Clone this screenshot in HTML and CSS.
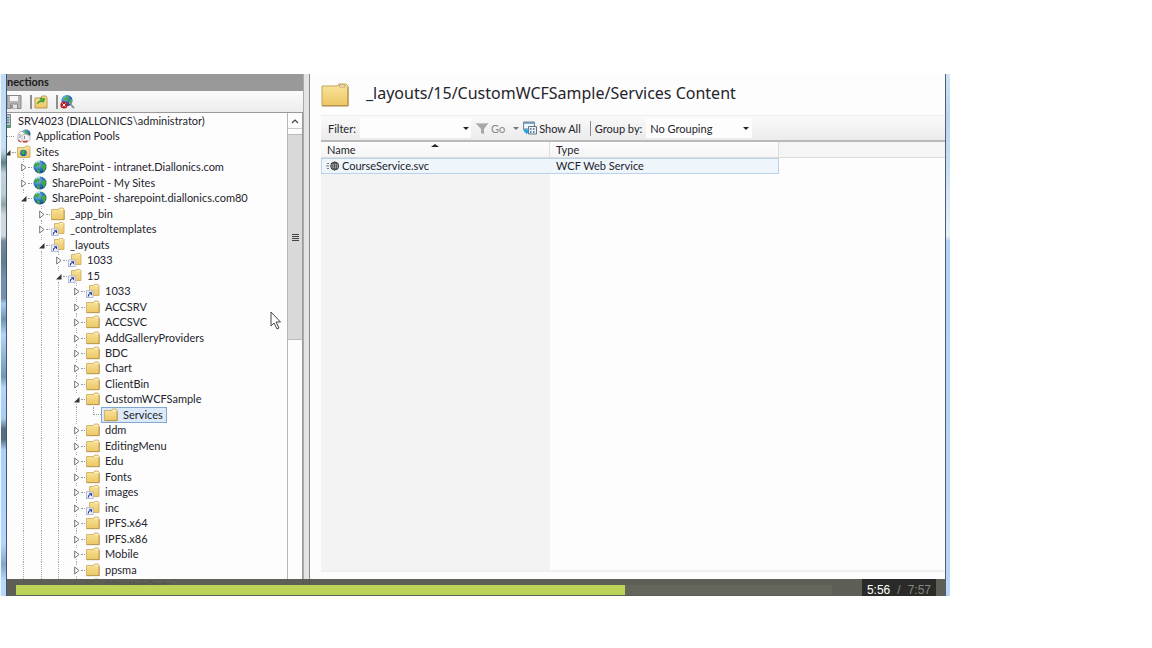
FILE: index.html
```html
<!DOCTYPE html>
<html lang="en">
<head>
<meta charset="utf-8">
<title>IIS Manager tutorial</title>
<link rel="stylesheet" href="styles.css">
</head>
<body>
<svg class="sprites" aria-hidden="true">
  <defs>
    <linearGradient id="gold" x1="0" y1="0" x2="0" y2="1"><stop offset="0" stop-color="#f9e49c"/><stop offset="1" stop-color="#edc765"/></linearGradient>
    <radialGradient id="sea" cx=".35" cy=".3" r=".8"><stop offset="0" stop-color="#8fc9f5"/><stop offset=".5" stop-color="#2878be"/><stop offset="1" stop-color="#123c78"/></radialGradient>
  </defs>
  <symbol id="folder" viewBox="0 0 14 14"><path d="M.5 2.5h7l1-1.500h3.500l1 1.500v10H.5z" fill="url(#gold)" stroke="#c9a95d" stroke-width=".8"/><path d="M9 2.500h3" stroke="#fff6cf"/><path d="M.5 12.700h12.800V3.500" fill="none" stroke="#b18e45" stroke-width=".8"/></symbol>
  <symbol id="link" viewBox="0 0 14 14"><path d="M3.500 1.500h4l1-1h3.500l1 1v10H3.500z" fill="url(#gold)" stroke="#c9a95d" stroke-width=".8"/><path d="M9 1.700h3" stroke="#fff6cf"/><rect x=".4" y="6.900" width="6.700" height="6.700" fill="#f1f3fc" stroke="#a5aed0" stroke-width=".8"/><path d="M2.300 12.500c0-1.500.4-2.200 1.500-2.700" fill="none" stroke="#21398f" stroke-width="1.200"/><path d="M2.700 8.300h3.300v3.200z" fill="#21398f"/></symbol>
  <symbol id="globe" viewBox="0 0 14 14"><circle cx="7" cy="7" r="6.500" fill="url(#sea)"/><path d="M1.500 4C3 1.500 5 1 6.500 1.200L5.500 3 7 4.500 5 6.500 3.500 6 2.500 8zM8.500 5.500l3-2 1.500 3-1 3.500-2 1.500-.5-3-1.500-1zM4 9l2.500 1 .5 2-1 1-2-1.500z" fill="#48a63f"/><path d="M3 3q2-2 4-1.500" stroke="#d6efff" fill="none"/></symbol>
  <symbol id="sites" viewBox="0 0 14 14"><path d="M.5 2.500h7l1-1.500h3.500l1 1.500v10H.5z" fill="url(#gold)" stroke="#c9a95d" stroke-width=".8"/><circle cx="6.500" cy="8" r="3.300" fill="#2268a8"/><path d="M4 7l3-2 1 2-2 3zM8 8h1.500L8 10.500z" fill="#4bb33e"/></symbol>
  <symbol id="pools" viewBox="0 0 14 14"><circle cx="9" cy="5" r="4.500" fill="url(#sea)"/><path d="M8 1l3 2-1 3-3 0zM11 5l2 1-2 2z" fill="#48a63f"/><path d="M1 5l3-3 4 2v8l-4 1-3-2z" fill="#f4f4f4" stroke="#999" stroke-width=".7"/><path d="M5 6l4-1 4 2v4l-3 2-5-1z" fill="#f5efef" stroke="#aaa" stroke-width=".7"/><path d="M1 10.500l3 2v1L1 12zM6 12l5-.5-1 2H6z" fill="#c53e35"/><path d="M3 5v4M7.500 7v3" stroke="#7994b5"/></symbol>
  <symbol id="server" viewBox="0 0 14 14"><path d="M3 .5h8.500v13H3z" fill="#b5c3ca" stroke="#75858d"/><path d="M5 3.500h5M5 6h5M5 8.500h5" stroke="#4e7182"/><path d="M8 11h3v2H8z" fill="#49ad50"/></symbol>
  <symbol id="tri" viewBox="0 0 6 10"><path d="M.7 2v7L5 5.500z" fill="#fff" stroke="#666" stroke-width=".9"/></symbol>
  <symbol id="open" viewBox="0 0 6 10"><path d="M5.500 3v5.500H0z" fill="#333"/></symbol>
</svg>

<main class="video">
  <div class="glass glass-left"></div>
  <section class="connections">
    <h2 class="pane-title">nections</h2>
    <div class="tools">
      <button class="tool" aria-label="Save"><svg viewBox="0 0 15 14"><path d="M0 .5h14v13H0z" fill="#b4b4b4" stroke="#888"/><path d="M3 1h8v5H3z" fill="#f5f5f5"/><path d="M3.500 9h7v5h-7z" fill="#e6e6e6" stroke="#888"/><path d="M5 10v3" stroke="#777" stroke-width="1.500"/></svg></button>
      <button class="tool" aria-label="Up one level"><svg viewBox="0 0 15 14"><path d="M1 3h6l1-2h4l1 2v10H1z" fill="url(#gold)" stroke="#b69a54"/><path d="M3 9Q4 6 7 5L6 3l5 .5L9.500 7.500 8 6.500Q5 7 3 9z" fill="#42ab31" stroke="#328b28" stroke-width=".5"/></svg></button>
      <button class="tool" aria-label="Delete connection"><svg viewBox="0 0 15 14"><circle cx="7" cy="5.500" r="5.500" fill="url(#sea)"/><path d="M3 4l4-3 2 2-3 3zM9 5l3-1v4l-2 1z" fill="#51ac45"/><path d="M9 8h2v2l3 3" stroke="#8b9299" stroke-width="1.800" fill="none"/><circle cx="4" cy="10" r="3.600" fill="#bd1b21"/><path d="M2.500 8.500l3 3m0-3l-3 3" stroke="#fff"/></svg></button>
    </div>
    <div class="tree-area">
      <ul class="tree">
        <li class="root"><svg class="icon"><use href="#server"/></svg><span>SRV4023 (DIALLONICS\administrator)</span></li>
        <li class="l1 leaf"><svg class="icon"><use href="#pools"/></svg><span>Application Pools</span></li>
        <li class="l1"><button aria-label="Collapse"><svg><use href="#open"/></svg></button><svg class="icon"><use href="#sites"/></svg><span>Sites</span></li>
        <li class="l2"><button aria-label="Expand"><svg><use href="#tri"/></svg></button><svg class="icon"><use href="#globe"/></svg><span>SharePoint - intranet.Diallonics.com</span></li>
        <li class="l2"><button aria-label="Expand"><svg><use href="#tri"/></svg></button><svg class="icon"><use href="#globe"/></svg><span>SharePoint - My Sites</span></li>
        <li class="l2"><button aria-label="Collapse"><svg><use href="#open"/></svg></button><svg class="icon"><use href="#globe"/></svg><span>SharePoint - sharepoint.diallonics.com80</span></li>
        <li class="l3"><button aria-label="Expand"><svg><use href="#tri"/></svg></button><svg class="icon"><use href="#folder"/></svg><span>_app_bin</span></li>
        <li class="l3"><button aria-label="Expand"><svg><use href="#tri"/></svg></button><svg class="icon"><use href="#link"/></svg><span>_controltemplates</span></li>
        <li class="l3"><button aria-label="Collapse"><svg><use href="#open"/></svg></button><svg class="icon"><use href="#link"/></svg><span>_layouts</span></li>
        <li class="l4"><button aria-label="Expand"><svg><use href="#tri"/></svg></button><svg class="icon"><use href="#link"/></svg><span>1033</span></li>
        <li class="l4"><button aria-label="Collapse"><svg><use href="#open"/></svg></button><svg class="icon"><use href="#link"/></svg><span>15</span></li>
        <li class="l5"><button aria-label="Expand"><svg><use href="#tri"/></svg></button><svg class="icon"><use href="#link"/></svg><span>1033</span></li>
        <li class="l5"><button aria-label="Expand"><svg><use href="#tri"/></svg></button><svg class="icon"><use href="#folder"/></svg><span>ACCSRV</span></li>
        <li class="l5"><button aria-label="Expand"><svg><use href="#tri"/></svg></button><svg class="icon"><use href="#folder"/></svg><span>ACCSVC</span></li>
        <li class="l5"><button aria-label="Expand"><svg><use href="#tri"/></svg></button><svg class="icon"><use href="#folder"/></svg><span>AddGalleryProviders</span></li>
        <li class="l5"><button aria-label="Expand"><svg><use href="#tri"/></svg></button><svg class="icon"><use href="#folder"/></svg><span>BDC</span></li>
        <li class="l5"><button aria-label="Expand"><svg><use href="#tri"/></svg></button><svg class="icon"><use href="#folder"/></svg><span>Chart</span></li>
        <li class="l5"><button aria-label="Expand"><svg><use href="#tri"/></svg></button><svg class="icon"><use href="#folder"/></svg><span>ClientBin</span></li>
        <li class="l5"><button aria-label="Collapse"><svg><use href="#open"/></svg></button><svg class="icon"><use href="#folder"/></svg><span>CustomWCFSample</span></li>
        <li class="l6"><i class="elbow"></i><a class="selected" href="#services"><svg class="icon"><use href="#folder"/></svg><span>Services</span></a></li>
        <li class="l5"><button aria-label="Expand"><svg><use href="#tri"/></svg></button><svg class="icon"><use href="#folder"/></svg><span>ddm</span></li>
        <li class="l5"><button aria-label="Expand"><svg><use href="#tri"/></svg></button><svg class="icon"><use href="#folder"/></svg><span>EditingMenu</span></li>
        <li class="l5"><button aria-label="Expand"><svg><use href="#tri"/></svg></button><svg class="icon"><use href="#folder"/></svg><span>Edu</span></li>
        <li class="l5"><button aria-label="Expand"><svg><use href="#tri"/></svg></button><svg class="icon"><use href="#folder"/></svg><span>Fonts</span></li>
        <li class="l5"><button aria-label="Expand"><svg><use href="#tri"/></svg></button><svg class="icon"><use href="#link"/></svg><span>images</span></li>
        <li class="l5"><button aria-label="Expand"><svg><use href="#tri"/></svg></button><svg class="icon"><use href="#link"/></svg><span>inc</span></li>
        <li class="l5"><button aria-label="Expand"><svg><use href="#tri"/></svg></button><svg class="icon"><use href="#folder"/></svg><span>IPFS.x64</span></li>
        <li class="l5"><button aria-label="Expand"><svg><use href="#tri"/></svg></button><svg class="icon"><use href="#folder"/></svg><span>IPFS.x86</span></li>
        <li class="l5"><button aria-label="Expand"><svg><use href="#tri"/></svg></button><svg class="icon"><use href="#folder"/></svg><span>Mobile</span></li>
        <li class="l5"><button aria-label="Expand"><svg><use href="#tri"/></svg></button><svg class="icon"><use href="#folder"/></svg><span>ppsma</span></li>
        <li class="l5"><button aria-label="Expand"><svg><use href="#tri"/></svg></button><svg class="icon"><use href="#folder"/></svg><span>PPSWebParts</span></li>
      </ul>
      <div class="scrollbar">
        <button class="scroll-up" aria-label="Scroll up"><svg viewBox="0 0 8 6"><path d="M1 5l3-3 3 3" fill="none" stroke="#444" stroke-width="1.200"/></svg></button>
        <div class="thumb"><i class="grip"></i></div>
      </div>
    </div>
  </section>
  <div class="splitter"></div>
  <section class="content">
    <header class="heading">
      <svg class="big-folder" viewBox="0 0 28 24"><path d="M1 3h15l2-2h7l2 2v19.500H1z" fill="url(#gold)" stroke="#c3a35b"/><path d="M18.500 2h5.500v2h-5.500z" fill="#fff8dc" stroke="#a99158" stroke-width=".7"/><path d="M1 23h26V4" fill="none" stroke="#ab8a46"/></svg>
      <h1>_layouts/15/CustomWCFSample/Services Content</h1>
    </header>
    <div class="body">
      <form class="filter">
        <label for="filter">Filter:</label>
        <input id="filter" type="text">
        <button type="button" class="drop" aria-label="Filter history"><i class="caret"></i></button>
        <button type="button" class="go"><svg viewBox="0 0 14 14"><path d="M.5 2h13L9 8v5l-3-1V8z" fill="#a7a7a7"/><path d="M2 2.500h10" stroke="#c9c9c9"/></svg>Go</button>
        <button type="button" class="drop faded" aria-label="Go options"><i class="caret"></i></button>
        <button type="button" class="all"><svg viewBox="0 0 14 14"><path d="M.6 1h10.800v7H.6z" fill="#f4f8fb" stroke="#667e91"/><path d="M1 2h10" stroke="#668db5" stroke-width="1.500"/><path d="M5.500 5.500h8v7.500h-8z" fill="#eef3f8" stroke="#607487"/><path d="M7 8h1.500M10 8h1.500M7 11h1.500M10 11h1.500" stroke="#3d5e86" stroke-width="1.500"/><path d="M0 6q1 3 3 3V7.500L6.500 10.500 3 13.500V12Q0 11 0 6z" fill="#2f9fdb"/></svg>Show All</button>
        <i class="divider"></i>
        <label for="group">Group by:</label>
        <span class="select"><select id="group"><option>No Grouping</option></select><i class="caret"></i></span>
      </form>
      <div class="list">
        <table>
          <thead><tr><th class="name">Name<i class="sort"></i></th><th class="type">Type</th><th class="rest"></th></tr></thead>
          <tbody><tr><td><span class="file"><svg viewBox="0 0 14 10"><path d="M1 2.500h2M0 5h3M1 7.500h2" stroke="#777"/><circle cx="8.700" cy="5" r="4" fill="#e6e6e6" stroke="#333"/><path d="M4.700 5h8M8.700 1v8M5.500 2.800h6.400M5.500 7.200h6.400" stroke="#444" stroke-width=".9"/><ellipse cx="8.700" cy="5" rx="2" ry="4" fill="none" stroke="#444" stroke-width=".8"/></svg>CourseService.svc</span></td><td>WCF Web Service</td><td class="rest"></td></tr></tbody>
        </table>
      </div>
    </div>
  </section>
  <div class="glass glass-right"></div>
  <div class="player">
    <progress value="356" max="477" aria-label="Playback position"></progress>
    <div class="time"><b>5:56</b><span>/</span><span>7:57</span></div>
  </div>
  <svg class="pointer" viewBox="0 0 12 19" aria-hidden="true"><path d="M1 1v14l3-3 3 6 2-1-3-6h4.500z" fill="#fff" stroke="#444"/></svg>
</main>
</body>
</html>
```
FILE: styles.css
```css
* { box-sizing: border-box; }
body {
  margin: 0;
  height: 100vh;
  padding: 74px 0 52px;
  background: #fff;
  color: #24242c;
  font: 11px/15px Lato, "Open Sans", sans-serif;
}
button, input, select {
  margin: 0;
  padding: 0;
  border: 0;
  background: none;
  color: inherit;
  font: inherit;
}
.sprites { position: absolute; width: 0; height: 0; }
.video {
  position: relative;
  display: grid;
  grid-template-columns: 7px 296px 7px 1fr 5px;
  max-width: 950px;
  height: 100%;
  min-height: 522px;
  overflow: hidden;
}
.glass { background: #b3d5fa; }
.glass-left {
  border-left: 1px solid #f2f6fa;
  border-right: 1px solid #43566d;
  background: linear-gradient(#bcdcf8 0, #c8e1f7 14%, #b6cfe1 15%, #5f7f86 17%, #c3d3df 19%, #b9ced4 23%, #8fa5a5 25%, #d0d8df 27%, #d0d8df 31%, #75899f 32%, #5f7d8d 36%, #7590ac 39%, #7590ac 43%, #a3cbf2 44%, #6d95b4 47%, #b3d5fa 50%, #6d99b4 58%, #b3d5fa 60%, #a7cdf3 66%, #566d82 68%, #566d82 70%, #a9d1fa 72%, #b3d6fb 90%, #81a7cb 94%, #b6d9fc 97%);
}
.glass-right {
  border-left: 1px solid #4f6074;
  background: linear-gradient(#cfe3fa 0, #bdd6f0 8%, #c5dcf3 16%, #e7f2fd 31%, #b3d2f4 32%, #b9d6f5 100%);
}

.connections { display: flex; flex-direction: column; min-width: 0; min-height: 0; background: #fdfdfd; overflow: hidden; }
.pane-title { margin: 0; height: 17px; background: #999; color: #1c1c1c; font-size: 11px; line-height: 15px; }
.tools { display: flex; align-items: center; height: 22px; border-bottom: 1px solid #999; background: linear-gradient(#fbfbfb, #ececec); }
.tool { display: flex; padding-right: 8px; }
.tool + .tool { padding: 0 7px 0 2px; border-left: 2px solid #8e8e8e; }
.tool svg { width: 15px; height: 14px; }
.tree-area { flex: 1; display: flex; min-height: 0; }
.tree { flex: 1; display: grid; grid-auto-rows: 1fr; margin: 0; padding: 0 0 3px; list-style: none; min-width: 0; }
.tree li { display: flex; align-items: center; min-height: 0; white-space: nowrap; background-repeat: no-repeat; }
.tree span { padding-bottom: 1px; }
.tree svg { display: block; flex: none; }
.icon { width: 14px; height: 14px; margin-right: 5px; }
.tree button { display: flex; flex: none; width: 12px; height: 10px; }
.tree button svg { width: 6px; height: 10px; background: #fdfdfd; }
.tree button::after { content: ""; width: 4px; height: 5px; margin-left: 1px; border-bottom: 1px dotted #999; }
.root { margin-left: -8px; }
.l1 { margin-left: -2px; }
.l2, .l3, .l4, .l5, .l6 {
  --dots: repeating-linear-gradient(#aaa 0 1px, transparent 1px 2px);
  background-image: var(--dots), var(--dots), var(--dots), var(--dots);
  background-position: 16px 0, 34px 0, 51px 0, 69px 0;
}
.l2 { padding-left: 14px; background-size: 1px, 0, 0, 0; }
.l3 { padding-left: 32px; background-size: 1px, 1px, 0, 0; }
.l4 { padding-left: 49px; background-size: 1px, 1px, 1px, 0; }
.l5, .l6 { padding-left: 67px; background-size: 1px, 1px, 1px, 1px; }
.elbow { align-self: flex-start; width: 8px; height: 8px; margin-left: 19px; border: dotted #999; border-width: 0 0 1px 1px; }
.selected { display: flex; align-items: center; height: 16px; padding: 0 3px 0 2px; border: 1px solid #81a6d0; background: #dce9f8; color: inherit; text-decoration: none; }
.leaf::before { content: ""; width: 9px; margin-right: 3px; border-bottom: 1px dotted #999; }
.scrollbar { display: flex; flex-direction: column; width: 16px; border-left: 1px solid #b5b5b5; border-right: 1px solid #999; background: #fdfdfd; }
.scroll-up { display: flex; justify-content: center; align-items: center; height: 16px; margin-bottom: 5px; border-bottom: 1px solid #ccc; }
.scroll-up svg { width: 8px; height: 6px; }
.thumb { display: flex; justify-content: center; align-items: center; height: 206px; border: 1px solid #bbb; border-width: 1px 0; background: #d9d9d9; }
.grip { width: 7px; height: 7px; background: repeating-linear-gradient(#444 0 1px, transparent 1px 2px); }
.splitter { border-right: 1px solid #888; background: linear-gradient(90deg, #aaa 0 1px, #e4e4e4 1px); }

.content { display: flex; flex-direction: column; min-width: 0; padding-left: 11px; background: #fdfdfd; }
.heading { display: flex; align-items: center; gap: 17px; height: 41px; }
.big-folder { width: 28px; height: 24px; }
h1 { margin: 0; padding-bottom: 3px; font: 400 16px/22px "Noto Sans", "Open Sans", sans-serif; white-space: nowrap; }
.body { flex: 1; display: flex; flex-direction: column; min-height: 0; padding-bottom: 24px; }
.filter { display: flex; align-items: center; height: 27px; padding-left: 7px; border-top: 1px solid #eee; border-bottom: 2px solid #b9b9b9; background: linear-gradient(#fafafa, #ebebeb); white-space: nowrap; }
.filter input { width: 101px; height: 20px; margin-left: 4px; background: #fdfdfd; }
.filter svg { width: 14px; height: 14px; }
.filter button { display: flex; align-items: center; }
.caret { border: solid transparent; border-width: 3px 3px 0; border-top-color: #222; }
.filter .drop { justify-content: center; width: 10px; height: 20px; background: #fdfdfd; }
.filter .go { gap: 2px; margin-left: 4px; color: #888; }
.filter .faded { margin: 0 2px 0 6px; background: none; opacity: .6; }
.filter .all { gap: 2px; }
.divider { width: 1px; height: 15px; margin: 0 4px 0 9px; background: #888; }
.select { display: flex; align-items: center; margin-left: 4px; padding-right: 3px; background: #fdfdfd; }
select { appearance: none; width: 97px; height: 20px; padding-left: 4px; }
.list { flex: 1; min-height: 0; border-bottom: 2px solid #f0f0f0; background: linear-gradient(#f3f3f3, #f3f3f3) 0 0 / 229px 100% no-repeat; }
table { width: 100%; table-layout: fixed; border-collapse: separate; border-spacing: 0; }
th, td { height: 16px; padding: 0 6px; text-align: left; font-weight: 400; line-height: 14px; }
th { border-right: 1px solid #ddd; border-bottom: 1px solid #ddd; background: linear-gradient(#fdfdfd, #f5f5f5); }
th.name, th.type { width: 229px; }
th.name { position: relative; }
th.rest { background: #f5f5f5; border-right: 0; }
.sort { position: absolute; top: 2px; left: 110px; border: solid transparent; border-width: 0 4px 3px; border-bottom-color: #222; }
tbody td { border: 1px solid #bcd1ea; border-width: 1px 0; background: #eef5fb; }
tbody td:first-child { border-left-width: 1px; padding-left: 4px; }
tbody td:nth-child(2) { border-right-width: 1px; }
tbody td.rest { border: 0; background: none; }
.file { display: flex; align-items: center; gap: 2px; }
.file svg { width: 14px; height: 10px; }

.player { position: absolute; inset: auto 5px 0 7px; display: flex; align-items: center; height: 17px; padding: 0 9px; background: rgba(84, 85, 77, .95); }
progress { appearance: none; flex: 1; height: 10px; margin: 4px 30px 0 0; border: 0; background: #64665c; }
progress::-webkit-progress-bar { background: #64665c; }
progress::-webkit-progress-value { background: #bbd458; }
.time { display: flex; align-items: center; gap: 7px; height: 17px; padding: 4px 5px 0; background: #2a2b28; color: #85877c; font: 12px/14px "Liberation Sans", sans-serif; }
.time b { color: #fff; font-weight: 400; }
.pointer { position: absolute; left: 270px; top: 237px; width: 12px; height: 19px; }
```
